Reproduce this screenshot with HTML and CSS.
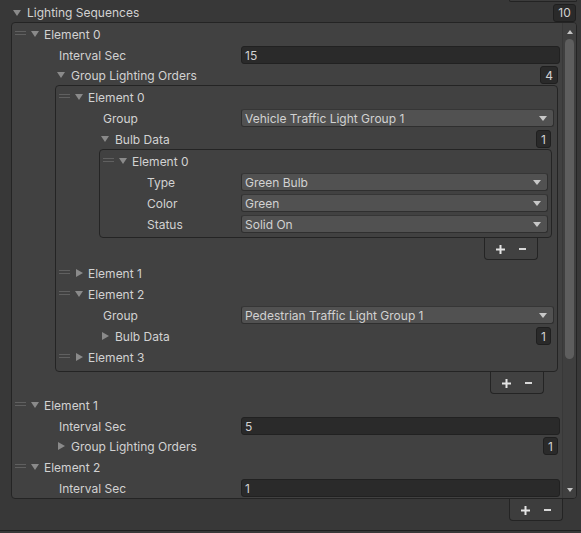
FILE: index.html
```html
<!DOCTYPE html>
<html>
<head>
<meta charset="utf-8">
<link rel="stylesheet" href="styles.css">
</head>
<body>
<div class="stub-row"><div class="stub"></div></div>
<div class="header">
  <span class="fold down"></span><span class="title">Lighting Sequences</span><span class="count count-top">10</span>
</div>
<div class="list list-outer">
  <div class="items">
    <div class="row elem"><span class="handle"></span><span class="fold down"></span><span class="name">Element 0</span></div>
    <div class="row prop l1 num-row"><span class="plabel">Interval Sec</span><span class="field num">15</span></div>
    <div class="row sub l1"><span class="fold down"></span><span class="name">Group Lighting Orders</span><span class="count">4</span></div>
    <div class="list list-nested lv2">
      <div class="items">
        <div class="row elem"><span class="handle"></span><span class="fold down"></span><span class="name">Element 0</span></div>
        <div class="row prop l2"><span class="plabel">Group</span><span class="field drop"><span class="val">Vehicle Traffic Light Group 1</span><span class="caret"></span></span></div>
        <div class="row sub l2"><span class="fold down"></span><span class="name">Bulb Data</span><span class="count">1</span></div>
        <div class="list list-nested lv3">
          <div class="items">
            <div class="row elem"><span class="handle"></span><span class="fold down"></span><span class="name">Element 0</span></div>
            <div class="row prop l3"><span class="plabel">Type</span><span class="field drop"><span class="val">Green Bulb</span><span class="caret"></span></span></div>
            <div class="row prop l3"><span class="plabel">Color</span><span class="field drop"><span class="val">Green</span><span class="caret"></span></span></div>
            <div class="row prop l3"><span class="plabel">Status</span><span class="field drop"><span class="val">Solid On</span><span class="caret"></span></span></div>
          </div>
        </div>
        <div class="footer foot3">
          <svg class="plus" width="9" height="9" viewBox="0 0 9 9"><path d="M4.5 0V9M0 4.5H9" stroke="#e4e4e4" stroke-width="2"/></svg>
          <svg class="minus" width="7" height="2" viewBox="0 0 7 2"><path d="M0 1H7" stroke="#d8d8d8" stroke-width="2"/></svg>
        </div>
        <div class="row elem gap-after-foot3"><span class="handle"></span><span class="fold right"></span><span class="name">Element 1</span></div>
        <div class="row elem"><span class="handle"></span><span class="fold down"></span><span class="name">Element 2</span></div>
        <div class="row prop l2"><span class="plabel">Group</span><span class="field drop"><span class="val">Pedestrian Traffic Light Group 1</span><span class="caret"></span></span></div>
        <div class="row sub l2"><span class="fold right"></span><span class="name">Bulb Data</span><span class="count">1</span></div>
        <div class="row elem"><span class="handle"></span><span class="fold right"></span><span class="name">Element 3</span></div>
      </div>
    </div>
    <div class="footer foot2">
      <svg class="plus" width="9" height="9" viewBox="0 0 9 9"><path d="M4.5 0V9M0 4.5H9" stroke="#e4e4e4" stroke-width="2"/></svg>
      <svg class="minus" width="7" height="2" viewBox="0 0 7 2"><path d="M0 1H7" stroke="#d8d8d8" stroke-width="2"/></svg>
    </div>
    <div class="row elem gap-after-foot2"><span class="handle"></span><span class="fold down"></span><span class="name">Element 1</span></div>
    <div class="row prop l1 num-row"><span class="plabel">Interval Sec</span><span class="field num">5</span></div>
    <div class="row sub l1"><span class="fold right"></span><span class="name">Group Lighting Orders</span><span class="count">1</span></div>
    <div class="row elem"><span class="handle"></span><span class="fold down"></span><span class="name">Element 2</span></div>
    <div class="row prop l1 num-row"><span class="plabel">Interval Sec</span><span class="field num">1</span></div>
  </div>
  <div class="scrollbar">
    <span class="sb-up"></span>
    <span class="sb-thumb"></span>
    <span class="sb-spacer"></span>
    <span class="sb-down"></span>
  </div>
</div>
<div class="footer foot1">
  <svg class="plus" width="9" height="9" viewBox="0 0 9 9"><path d="M4.5 0V9M0 4.5H9" stroke="#e4e4e4" stroke-width="2"/></svg>
  <svg class="minus" width="7" height="2" viewBox="0 0 7 2"><path d="M0 1H7" stroke="#d8d8d8" stroke-width="2"/></svg>
</div>
<div class="bottom-line"></div>
</body>
</html>
```

FILE: styles.css
```css
* { box-sizing: border-box; }
html, body {
  margin: 0;
  padding: 0;
  background: #383838;
  height: 533px;
  overflow: hidden;
}
body {
  font-family: Inter, "Noto Sans", "DejaVu Sans", sans-serif;
  font-size: 12px;
  color: #d2d2d2;
}

/* top stub of the component above */
.stub-row {
  display: flex;
  justify-content: flex-end;
  height: 2px;
}
.stub {
  width: 68px;
  height: 2px;
  margin-right: 4px;
  background: #3c3c3c;
  border: 1px solid #232323;
  border-top: none;
  border-radius: 0 0 3px 3px;
}

/* header */
.header {
  display: flex;
  align-items: center;
  height: 19px;
  margin-top: 1px;
  padding-left: 13px;
}
.header .fold { margin-right: 5px; }
.title { color: #d2d2d2; }

.count {
  margin-left: auto;
  min-width: 15px;
  height: 18px;
  padding: 0 4px;
  display: flex;
  align-items: center;
  justify-content: center;
  background: #2a2a2a;
  border: 1px solid #1f1f1f;
  border-radius: 3px;
  color: #d2d2d2;
}
.count-top { margin-right: 5px; width: 23px; }

/* lists */
.list {
  background: #414141;
  border: 1px solid #242424;
  border-radius: 4px;
}
.list-outer {
  display: flex;
  margin-left: 11px;
  width: 566px;
  height: 477px;
  overflow: hidden;
}
.list-outer > .items {
  flex: 1;
  min-width: 0;
  overflow: hidden;
}
.items {
  padding-top: 2px;
  display: flex;
  flex-direction: column;
}
.list-nested {
  margin-top: 1px;
  flex: none;
}
.lv2 { margin-left: 43px; margin-right: 4px; }
.lv2 > .items { padding-bottom: 5px; }
.lv3 { margin-left: 43px; margin-right: 5px; }
.lv3 > .items { padding-bottom: 4px; }

/* rows */
.row {
  display: flex;
  align-items: center;
  height: 18px;
  margin-top: 3px;
  flex: none;
}
.items > .row:first-child { margin-top: 0; }
.num-row + .sub { margin-top: 2px; }
.gap-after-foot3 { margin-top: 4px; }
.gap-after-foot2 { margin-top: 2px; }

.elem { padding-left: 3px; }
.elem .handle { margin-right: 5px; }
.elem .fold { margin-right: 4px; }

.prop { padding-left: 47px; }
.sub { padding-left: 45px; }
.sub .fold { margin-right: 5px; }

.name, .plabel { color: #d2d2d2; white-space: nowrap; }
.plabel { flex: none; }
.l1 .plabel { width: 182px; }
.l2 .plabel { width: 138px; }
.l3 .plabel { width: 94px; }

.l1 .field { margin-right: 2px; }
.l1 .count { margin-right: 4px; }
.l2 .field { margin-right: 3px; }
.l2 .count { margin-right: 6px; }
.l3 .field { margin-right: 3px; }

/* handle */
.handle {
  flex: none;
  width: 11px;
  height: 4px;
  border-top: 1px solid #606060;
  border-bottom: 1px solid #606060;
  transform: translateY(-1px);
}

/* foldout arrows */
.fold {
  flex: none;
  width: 9px;
  height: 8px;
  position: relative;
}
.fold.down::before {
  content: "";
  position: absolute;
  left: 0;
  top: 1px;
  border-left: 4.5px solid transparent;
  border-right: 4.5px solid transparent;
  border-top: 6px solid #8a8a8a;
}
.fold.right::before {
  content: "";
  position: absolute;
  left: 1px;
  top: 0;
  border-top: 4px solid transparent;
  border-bottom: 4px solid transparent;
  border-left: 7px solid #8a8a8a;
}

/* fields */
.field {
  flex: 1;
  min-width: 0;
  height: 18px;
  display: flex;
  align-items: center;
  padding-left: 3px;
  border-radius: 3px;
  color: #d2d2d2;
  white-space: nowrap;
}
.num {
  background: #2a2a2a;
  border: 1px solid #212121;
}
.drop {
  background: #515151;
  border: 1px solid #2f2f2f;
  border-top-color: #363636;
}
.drop .val { flex: 1; }
.caret {
  flex: none;
  width: 0;
  height: 0;
  margin-right: 6px;
  border-left: 4px solid transparent;
  border-right: 4px solid transparent;
  border-top: 5px solid #c8c8c8;
}

/* footers (+ / -) */
.footer {
  flex: none;
  display: flex;
  align-items: center;
  width: 54px;
  height: 22px;
  padding: 1px 0 0 11px;
  border: 1px solid #242424;
  border-top: none;
  border-radius: 0 0 4px 4px;
  background: #414141;
  align-self: flex-end;
}
.footer .minus { margin-left: 14px; }
.foot3 { margin-right: 19px; }
.foot2 { margin-right: 18px; }
.foot1 { margin-left: auto; margin-right: 18px; background: #3d3d3d; }

/* scrollbar */
.scrollbar {
  flex: none;
  width: 14px;
  display: flex;
  flex-direction: column;
  align-items: center;
  border-left: 1px solid #383838;
  background: #3f3f3f;
}
.sb-up {
  margin-top: 7px;
  border-left: 3.5px solid transparent;
  border-right: 3.5px solid transparent;
  border-bottom: 4px solid #c4c4c4;
}
.sb-thumb {
  margin-top: 5px;
  width: 9px;
  height: 320px;
  border-radius: 5px;
  background: #5e5e5e;
}
.sb-spacer { flex: 1; }
.sb-down {
  margin-bottom: 6px;
  border-left: 3.5px solid transparent;
  border-right: 3.5px solid transparent;
  border-top: 4px solid #c4c4c4;
}

.bottom-line {
  margin-top: 9px;
  height: 1px;
  background: #1f1f1f;
}
```
